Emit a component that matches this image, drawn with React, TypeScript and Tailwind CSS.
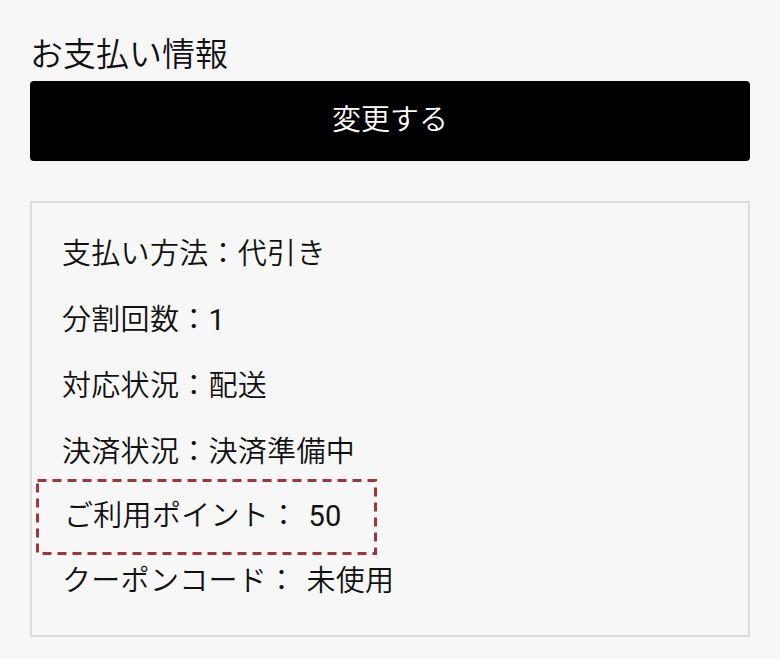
import React from "react";

const rows: [string, string][] = [
  ["支払い方法：", "代引き"],
  ["分割回数：", "1"],
  ["対応状況：", "配送"],
  ["決済状況：", "決済準備中"],
];

export default function App() {
  return (
    <div
      className="min-h-[659px] w-[780px] bg-[#f7f7f7] px-[30px] pt-[32px] text-[#111111] font-[350]"
      style={{ fontFamily: 'Roboto, "Noto Sans CJK JP", "Noto Sans", sans-serif' }}
    >
      <h2 className="text-[33px] leading-[46px] font-[350]">お支払い情報</h2>
      <button className="mt-[3px] flex h-[80px] w-full items-center justify-center rounded-[4px] bg-black text-[29px] text-white">
        変更する
      </button>
      <div className="mt-[40px] border-2 border-[#dadde0] pt-[19px] pb-[20px] pl-[30px]">
        {rows.map(([k, v]) => (
          <div key={k} className="flex h-[66px] items-center text-[29px] tracking-[0.3px]">
            <span>{k}</span>
            <span className={v === "1" ? "font-normal" : ""}>{v}</span>
          </div>
        ))}
        <div className="relative -mt-[7px] -mb-[6px] -ml-[26px] flex h-[76px] w-[341px] items-center pl-[28px] text-[29px] tracking-[0.3px]">
          <svg className="absolute inset-0" width="341" height="76" viewBox="0 0 341 76">
            <rect
              x="1.5"
              y="1.5"
              width="338"
              height="73"
              fill="none"
              stroke="#a0363b"
              strokeWidth="3"
              strokeDasharray="9 6"
            />
          </svg>
          <span className="relative">ご利用ポイント：</span>
          <span className="relative ml-[10px] font-normal">50</span>
        </div>
        <div className="flex h-[66px] items-center text-[29px] tracking-[0.3px]">
          <span>クーポンコード：</span>
          <span className="ml-[10px]">未使用</span>
        </div>
      </div>
    </div>
  );
}
